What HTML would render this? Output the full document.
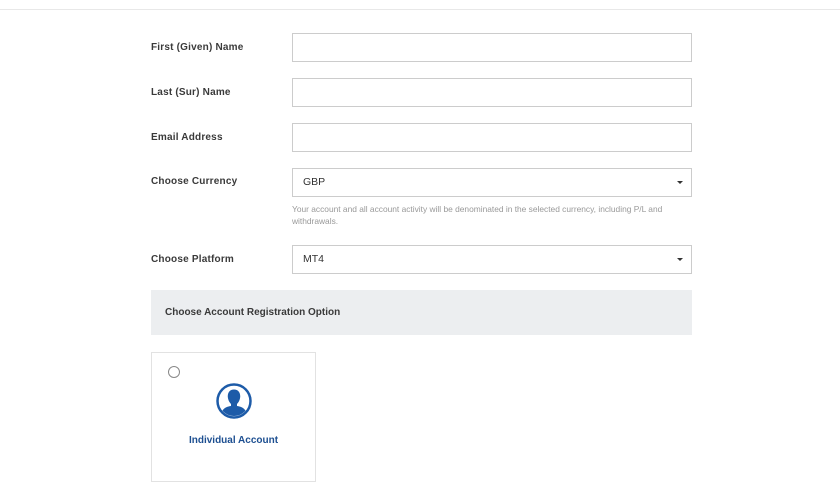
<!DOCTYPE html>
<html><head><style>
body{margin:0;width:840px;height:490px;background:#fff;font-family:"Liberation Sans",Arial,sans-serif;position:relative;overflow:hidden}
.line{position:absolute;left:0;right:0;top:9px;height:1px;background:#e8e8e8}
.lbl{position:absolute;left:151px;font-size:10px;font-weight:bold;color:#3a3a3a;letter-spacing:0.2px}
.in{position:absolute;left:292px;width:398px;height:27px;border:1px solid #ccc;background:#fff;font-size:10.5px;color:#333;line-height:27px;box-sizing:content-box}
.in span{margin-left:10px}
.car{position:absolute;right:8px;top:12px;width:0;height:0;border-left:3px solid transparent;border-right:3px solid transparent;border-top:3px solid #333}
.help{position:absolute;left:292px;top:203px;width:402px;font-size:8.4px;color:#999;line-height:12px}
.bar{position:absolute;left:151px;top:290px;width:541px;height:45px;background:#eceef0;font-size:10px;font-weight:bold;color:#3a3a3a;line-height:46px}
.card{position:absolute;left:151px;top:352px;width:163px;height:128px;border:1px solid #e2e2e2}
.radio{position:absolute;left:16px;top:13px;width:10px;height:10px;border:1.5px solid #888;border-radius:50%}
.name{position:absolute;left:0;right:0;top:82px;text-align:center;font-size:10px;font-weight:bold;color:#1d4f91}
</style></head><body>
<div class="line"></div>
<div class="lbl" style="top:42px">First (Given) Name</div>
<div class="in" style="top:33px"></div>
<div class="lbl" style="top:87px">Last (Sur) Name</div>
<div class="in" style="top:78px"></div>
<div class="lbl" style="top:132px">Email Address</div>
<div class="in" style="top:123px"></div>
<div class="lbl" style="top:176px">Choose Currency</div>
<div class="in" style="top:168px"><span>GBP</span><div class="car"></div></div>
<div class="help">Your account and all account activity will be denominated in the selected currency, including P/L and withdrawals.</div>
<div class="lbl" style="top:254px">Choose Platform</div>
<div class="in" style="top:245px"><span>MT4</span><div class="car"></div></div>
<div class="bar"><span style="margin-left:14px">Choose Account Registration Option</span></div>
<div class="card">
<div class="radio"></div>
<svg style="position:absolute;left:63px;top:29px" width="38" height="38" viewBox="0 0 38 38">
<defs><clipPath id="c"><circle cx="19" cy="19" r="15"/></clipPath></defs>
<circle cx="19" cy="19" r="16.5" fill="none" stroke="#1d5ba8" stroke-width="2.5"/>
<g clip-path="url(#c)" fill="#1d5ba8">
<path d="M19 7.5 C14.5 7.5 12.5 11 12.8 15 C13.1 18.5 15 21 16 22 L16 24 C10 25 6 27 6 36 L32 36 C32 27 28 25 22 24 L22 22 C23 21 24.9 18.5 25.2 15 C25.5 11 23.5 7.5 19 7.5Z"/>
</g></svg>
<div class="name">Individual Account</div>
</div>
</body></html>
